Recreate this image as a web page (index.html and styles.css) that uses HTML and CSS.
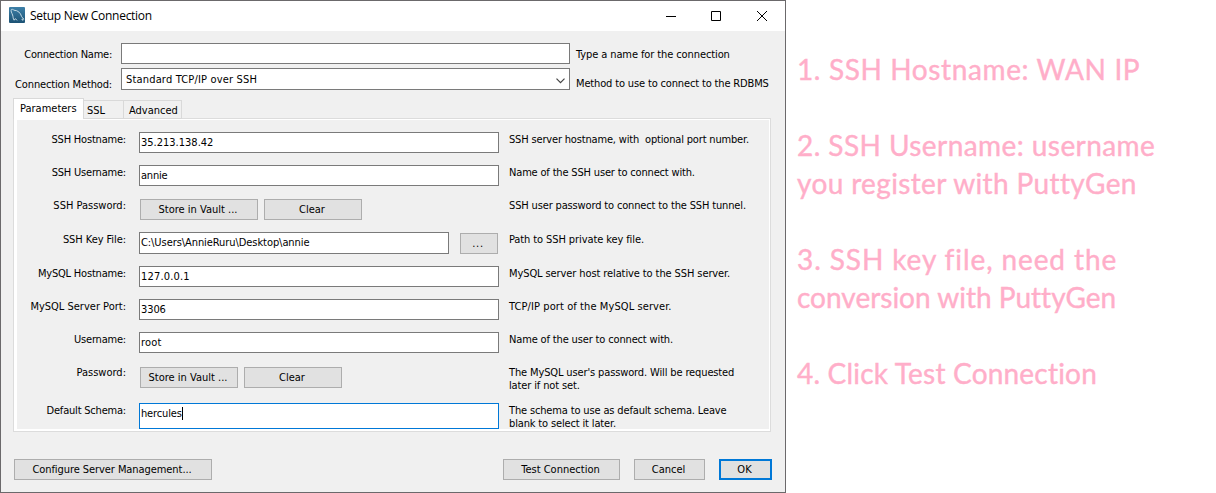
FILE: index.html
```html
<!DOCTYPE html>
<html lang="en">
<head>
<meta charset="utf-8">
<title>Setup New Connection</title>
<link rel="stylesheet" href="styles.css">
</head>
<body>
<main class="dialog">
  <header class="titlebar">
    <svg class="logo" width="16" height="16" viewBox="0 0 16 16">
      <defs><linearGradient id="sea" x1="0" y1="0" x2="0" y2="1"><stop offset="0" stop-color="#3d80a8"/><stop offset="1" stop-color="#1c5274"/></linearGradient></defs>
      <rect width="16" height="16" rx="1" fill="url(#sea)"/>
      <path d="M5.200 13.200C3.800 11.500 4.300 9.800 3.600 8C2.900 6 1.500 4 2.300 2.600C3 1.800 4.200 2.600 5 3.200C9 3.300 11.600 6 12.500 9.300C13 10.700 14.200 11.200 14.800 12.200L12.900 12.300L13.900 13.700M5.200 13.200L6.400 11.600L8 13.400" fill="none" stroke="#c3d9e4" stroke-width="1"/>
    </svg>
    <h1 class="caption">Setup New Connection</h1>
    <svg class="controls" width="102" height="12" viewBox="0 0 102 12" fill="none" stroke="#000">
      <path d="M0 6.500H10M45.500 1.500H54.500V10.500H45.500ZM91 1L101 11M101 1L91 11"/>
    </svg>
  </header>

  <section class="top">
    <label class="label ls-25">Connection Name:</label>
    <div class="field"></div>
    <p class="hint ls-10">Type a name for the connection</p>
    <label class="label method ls-15">Connection Method:</label>
    <div class="field select"><span class="ls17">Standard TCP/IP over SSH</span>
      <svg width="9" height="6" viewBox="0 0 9 6" fill="none" stroke="#444" stroke-width="1.200"><path d="M.5 .7L4.500 4.700L8.500 .7"/></svg>
    </div>
    <p class="hint method ls-15">Method to use to connect to the RDBMS</p>
  </section>

  <nav class="tabs">
    <span class="tab active">Parameters</span>
    <span class="tab ssl">SSL</span>
    <span class="tab adv">Advanced</span>
  </nav>

  <section class="panel">
    <div class="form">
      <label class="label ls-20">SSH Hostname:</label>
      <div class="field">35.213.138.42</div>
      <p class="hint ls-17">SSH server hostname, with&nbsp; optional port number.</p>

      <label class="label ls-20">SSH Username:</label>
      <div class="field ls-20">annie</div>
      <p class="hint ls-17">Name of the SSH user to connect with.</p>

      <label class="label">SSH Password:</label>
      <div class="buttons"><button class="btn wide">Store in Vault ...</button><button class="btn mid">Clear</button></div>
      <p class="hint ls-15">SSH user password to connect to the SSH tunnel.</p>

      <label class="label ls-07">SSH Key File:</label>
      <div class="file"><div class="field ls-07">C:\Users\AnnieRuru\Desktop\annie</div><button class="btn browse">...</button></div>
      <p class="hint ls-10">Path to SSH private key file.</p>

      <label class="label ls-20">MySQL Hostname:</label>
      <div class="field ls17">127.0.0.1</div>
      <p class="hint ls-10">MySQL server host relative to the SSH server.</p>

      <label class="label">MySQL Server Port:</label>
      <div class="field ls-10">3306</div>
      <p class="hint ls09">TCP/IP port of the MySQL server.</p>

      <label class="label ls-20">Username:</label>
      <div class="field ls17">root</div>
      <p class="hint ls-15">Name of the user to connect with.</p>

      <label class="label raised">Password:</label>
      <div class="buttons"><button class="btn mid">Store in Vault ...</button><button class="btn mid">Clear</button></div>
      <p class="hint raised ls-13">The MySQL user's password. Will be requested<br>later if not set.</p>

      <label class="label ls-20">Default Schema:</label>
      <div class="field focused"><span class="ls-15">hercules</span><i class="caret"></i></div>
      <p class="hint ls-15">The schema to use as default schema. Leave<br>blank to select it later.</p>
    </div>
  </section>

  <footer class="footer">
    <button class="btn configure ls-07">Configure Server Management...</button>
    <button class="btn test">Test Connection</button>
    <button class="btn cancel">Cancel</button>
    <button class="btn ok">OK</button>
  </footer>
</main>

<aside class="notes">
  <p class="n1">1. SSH Hostname: WAN IP</p>
  <p><span class="n2">2. SSH Username: username</span><br><span class="n3">you register with PuttyGen</span></p>
  <p><span class="n4">3. SSH key file, need the</span><br>conversion with PuttyGen</p>
  <p class="n5">4. Click Test Connection</p>
</aside>
</body>
</html>
```
FILE: styles.css
```css
* { box-sizing: border-box; }

body {
  margin: 0;
  height: 493px;
  display: flex;
  overflow: hidden;
  background: #fff;
  color: #000;
  font: 11px/13px Tahoma, "DejaVu Sans Condensed", sans-serif;
}

p, h1 { margin: 0; }

.dialog {
  width: 786px;
  height: 493px;
  flex: none;
  border: 1px solid #6b696b;
  background: #f0f0f0;
}

.titlebar {
  height: 30px;
  display: flex;
  align-items: center;
  padding: 0 17px 0 8px;
  background: #fff;
}
.logo { margin-top: -2px; }
.caption {
  flex: 1;
  margin: -1px 0 0 5px;
  font: 12px/16px "Segoe UI", "Open Sans", sans-serif;
  letter-spacing: -.28px;
}
.controls { margin-top: -1px; }

.label { text-align: right; white-space: nowrap; }
.hint { white-space: nowrap; }

.field {
  height: 21px;
  padding: 3px 2px 0 1px;
  border: 1px solid #7a7a7a;
  background: #fff;
  white-space: nowrap;
}
.focused { height: 26px; display: flex; border-color: #0078d7; }
.caret { width: 1px; height: 13px; background: #000; }

.top {
  display: grid;
  grid-template-columns: 111px 449px 1fr;
  grid-template-rows: 25px 22px;
  padding-top: 12px;
}
.top .label { padding-top: 5px; }
.top .field { margin-left: 9px; margin-right: -9px; }
.top .hint { padding: 5px 0 0 15px; }
.top .label.method { padding-top: 10px; }
.top .hint.method { padding-top: 9px; }
.select {
  height: 22px;
  display: flex;
  justify-content: space-between;
}
.top .select { padding: 4px 4px 0; }
.select svg { margin-top: 5px; }

.tabs {
  height: 21px;
  margin: 8px 0 -1px 12px;
  display: flex;
  align-items: flex-end;
  position: relative;
}
.tab {
  height: 19px;
  padding: 3px 0 0 5px;
  border: 1px solid #d9d9d9;
  border-left: 0;
}
.tab.active {
  width: 71px;
  height: 21px;
  padding: 3px 0 0 6px;
  border: 1px solid #d9d9d9;
  border-bottom: 0;
  background: #fff;
}
.ssl { width: 40px; padding-left: 3px; }
.adv { width: 58px; }

.panel {
  width: 758px;
  height: 314px;
  margin-left: 12px;
  border: 1px solid #dcdcdc;
  padding: 1px 1px 2px 3px;
  background: #fff;
}
.form {
  height: 309px;
  padding-top: 12px;
  display: grid;
  grid-template-columns: 109px 360px 1fr;
  grid-template-rows: 33px 33px 34px 34px 33px 33px 34px 37px 26px;
  background: #f0f0f0;
}
.form > .label { padding-top: 1px; }
.form > .field { margin-left: 13px; margin-right: -13px; }
.form > .hint { padding: 1px 0 0 23px; }
.form > .raised { padding-top: 0; }

.buttons { display: flex; gap: 6px; padding: 1px 0 0 14px; }
.file { display: flex; gap: 11px; margin-right: -13px; padding-left: 13px; }
.file .field { width: 310px; height: 22px; }

.btn {
  height: 21px;
  flex: none;
  padding: 0 2px 1px 0;
  border: 1px solid #adadad;
  background: #e1e1e1;
  color: #000;
  font: inherit;
}
.wide { width: 118px; }
.mid { width: 98px; }
.browse { width: 38px; margin-top: 1px; letter-spacing: .7px; }

.footer {
  display: flex;
  gap: 14px;
  padding: 27px 13px 0;
}
.configure { width: 198px; margin-right: auto; }
.test { width: 117px; }
.cancel { width: 71px; }
.ok { width: 53px; border: 2px solid #0078d7; }

.notes {
  padding: 50px 0 0 11px;
  color: #ffaec9;
  font: 28px/38px "Comic Sans MS", Lato, sans-serif;
  font-variant-ligatures: none;
  -webkit-text-stroke: .4px #ffaec9;
  white-space: nowrap;
}
.notes p + p { margin-top: 38px; }
.n1 { letter-spacing: .62px; }
.n2 { letter-spacing: .43px; }
.n3 { letter-spacing: .36px; }
.n4 { letter-spacing: .9px; }
.n5 { letter-spacing: .2px; }

/* Letter-spacing steps, in hundredths of a pixel */
.ls-25 { letter-spacing: -.25px; }
.ls-20 { letter-spacing: -.2px; }
.ls-17 { letter-spacing: -.17px; }
.ls-15 { letter-spacing: -.15px; }
.ls-13 { letter-spacing: -.13px; }
.ls-10 { letter-spacing: -.1px; }
.ls-07 { letter-spacing: -.07px; }
.ls09 { letter-spacing: .09px; }
.ls17 { letter-spacing: .17px; }
```
